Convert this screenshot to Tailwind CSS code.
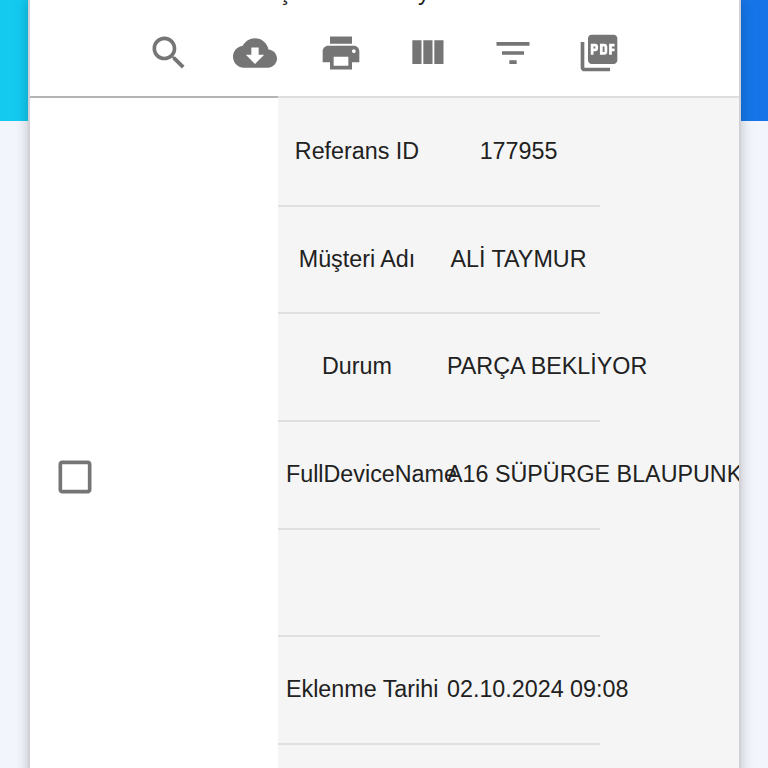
<!DOCTYPE html>
<html lang="tr">
<head>
    <meta charset="UTF-8">
    <meta name="viewport" content="width=device-width, initial-scale=1.0">
    <title>Kayıtlar</title>
    <script src="https://cdn.jsdelivr.net/npm/@tailwindcss/browser@4"></script>
</head>
<body>
    <div class="h-[768px] overflow-hidden bg-[#f3f5fc] font-['Liberation_Sans',Arial,sans-serif] text-[#212121]">
        <!-- banner behind the card -->
        <div class="h-[121px] bg-gradient-to-r from-[#14cbef] to-[#1673e8]"></div>

        <div class="relative -mt-[121px] ml-[28px] w-[713px] bg-white border-x-2 border-[#d0d0d6] shadow-[0_0_12px_rgba(0,0,0,0.22)]">
            <!-- title, mostly scrolled off -->
            <div class="h-[6px] flow-root">
                <p class="-mt-[22px] pl-[217px] text-[23.3px] leading-[28px] whitespace-nowrap">Müşteri Arıza Kayıtları</p>
            </div>

            <!-- toolbar -->
            <div class="h-[90px] pt-[25px] pr-[1px] flex justify-center gap-[42.1px] text-[#757575]">
                <svg class="w-[44px] h-[44px]" viewBox="0 0 24 24" fill="currentColor"><path d="M15.5 14h-.79l-.28-.27C15.41 12.59 16 11.11 16 9.5 16 5.91 13.09 3 9.5 3S3 5.91 3 9.5 5.91 16 9.5 16c1.61 0 3.09-.59 4.23-1.57l.27.28v.79l5 4.99L20.49 19l-4.99-5zm-6 0C7.01 14 5 11.99 5 9.5S7.01 5 9.5 5 14 7.01 14 9.5 11.99 14 9.5 14z"/></svg>
                <svg class="w-[44px] h-[44px]" viewBox="0 0 24 24" fill="currentColor"><path d="M19.35 10.04C18.67 6.59 15.64 4 12 4 9.11 4 6.6 5.64 5.35 8.04 2.34 8.36 0 10.91 0 14c0 3.31 2.69 6 6 6h13c2.76 0 5-2.24 5-5 0-2.64-2.05-4.78-4.65-4.96zM17 13l-5 5-5-5h3V9h4v4h3z"/></svg>
                <svg class="w-[44px] h-[44px]" viewBox="0 0 24 24" fill="currentColor"><path d="M19 8H5c-1.66 0-3 1.34-3 3v6h4v4h12v-4h4v-6c0-1.66-1.34-3-3-3zm-3 11H8v-5h8v5zm3-7c-.55 0-1-.45-1-1s.45-1 1-1 1 .45 1 1-.45 1-1 1zm-1-9H6v4h12V3z"/></svg>
                <svg class="w-[44px] h-[44px]" viewBox="0 0 24 24" fill="currentColor"><path d="M10 18h5V5h-5v13zm-6 0h5V5H4v13zM16 5v13h5V5h-5z"/></svg>
                <svg class="w-[44px] h-[44px]" viewBox="0 0 24 24" fill="currentColor"><path d="M10 18h4v-2h-4v2zM3 6v2h18V6H3zm3 7h12v-2H6v2z"/></svg>
                <svg class="w-[44px] h-[44px]" viewBox="0 0 24 24" fill="currentColor"><path d="M20 2H8c-1.1 0-2 .9-2 2v12c0 1.1.9 2 2 2h12c1.1 0 2-.9 2-2V4c0-1.1-.9-2-2-2zm-8.5 7.5c0 .83-.67 1.5-1.5 1.5H9v2H7.5V7H10c.83 0 1.5.67 1.5 1.5v1zm5 2c0 .83-.67 1.5-1.5 1.5h-2.5V7H15c.83 0 1.5.67 1.5 1.5v3zm4-3H19v1h1.5V11H19v2h-1.5V7h3v1.5zM9 9.5h1v-1H9v1zM4 6H2v14c0 1.1.9 2 2 2h14v-2H4V6zm10 5.5h1v-3h-1v3z"/></svg>
            </div>

            <!-- table row -->
            <div class="flex h-[759px] overflow-hidden">
                <div class="w-[248px] shrink-0 border-t-2 border-[#b4b4b4] pl-[23px] flex items-center">
                    <svg class="w-[44px] h-[44px] text-[#757575]" viewBox="0 0 24 24" fill="currentColor"><path d="M19 5v14H5V5h14m0-2H5c-1.1 0-2 .9-2 2v14c0 1.1.9 2 2 2h14c1.1 0 2-.9 2-2V5c0-1.1-.9-2-2-2z"/></svg>
                </div>
                <div class="flex-1 border-t-2 border-[#dedede] bg-[#f5f5f5] overflow-hidden">
                    <div class="mt-[1px] w-[322px] grid grid-cols-[161px_161px] auto-rows-[107.67px] text-[23.3px] leading-[28px] whitespace-nowrap text-center">
                        <div class="border-b-2 border-[#e0e0e0] pl-2 pr-[11px] pt-[38px]">Referans ID</div>
                        <div class="border-b-2 border-[#e0e0e0] pl-2 pr-[10px] pt-[38px]">177955</div>
                        <div class="border-b-2 border-[#e0e0e0] pl-2 pr-[11px] pt-[38px]">Müşteri Adı</div>
                        <div class="border-b-2 border-[#e0e0e0] pl-2 pr-[10px] pt-[38px]">ALİ TAYMUR</div>
                        <div class="border-b-2 border-[#e0e0e0] pl-2 pr-[11px] pt-[38px]">Durum</div>
                        <div class="border-b-2 border-[#e0e0e0] pl-2 pr-[10px] pt-[38px]">PARÇA BEKLİYOR</div>
                        <div class="border-b-2 border-[#e0e0e0] pl-2 pr-[11px] pt-[38px]">FullDeviceName</div>
                        <div class="border-b-2 border-[#e0e0e0] pl-2 pr-[10px] pt-[38px]">A16 SÜPÜRGE BLAUPUNKT</div>
                        <div class="border-b-2 border-[#e0e0e0]"></div>
                        <div class="border-b-2 border-[#e0e0e0]"></div>
                        <div class="border-b-2 border-[#e0e0e0] pl-2 pr-[11px] pt-[38px]">Eklenme Tarihi</div>
                        <div class="border-b-2 border-[#e0e0e0] pl-2 pr-[10px] pt-[38px]">02.10.2024 09:08</div>
                        <div></div>
                        <div></div>
                    </div>
                </div>
            </div>
        </div>
    </div>
</body>
</html>
